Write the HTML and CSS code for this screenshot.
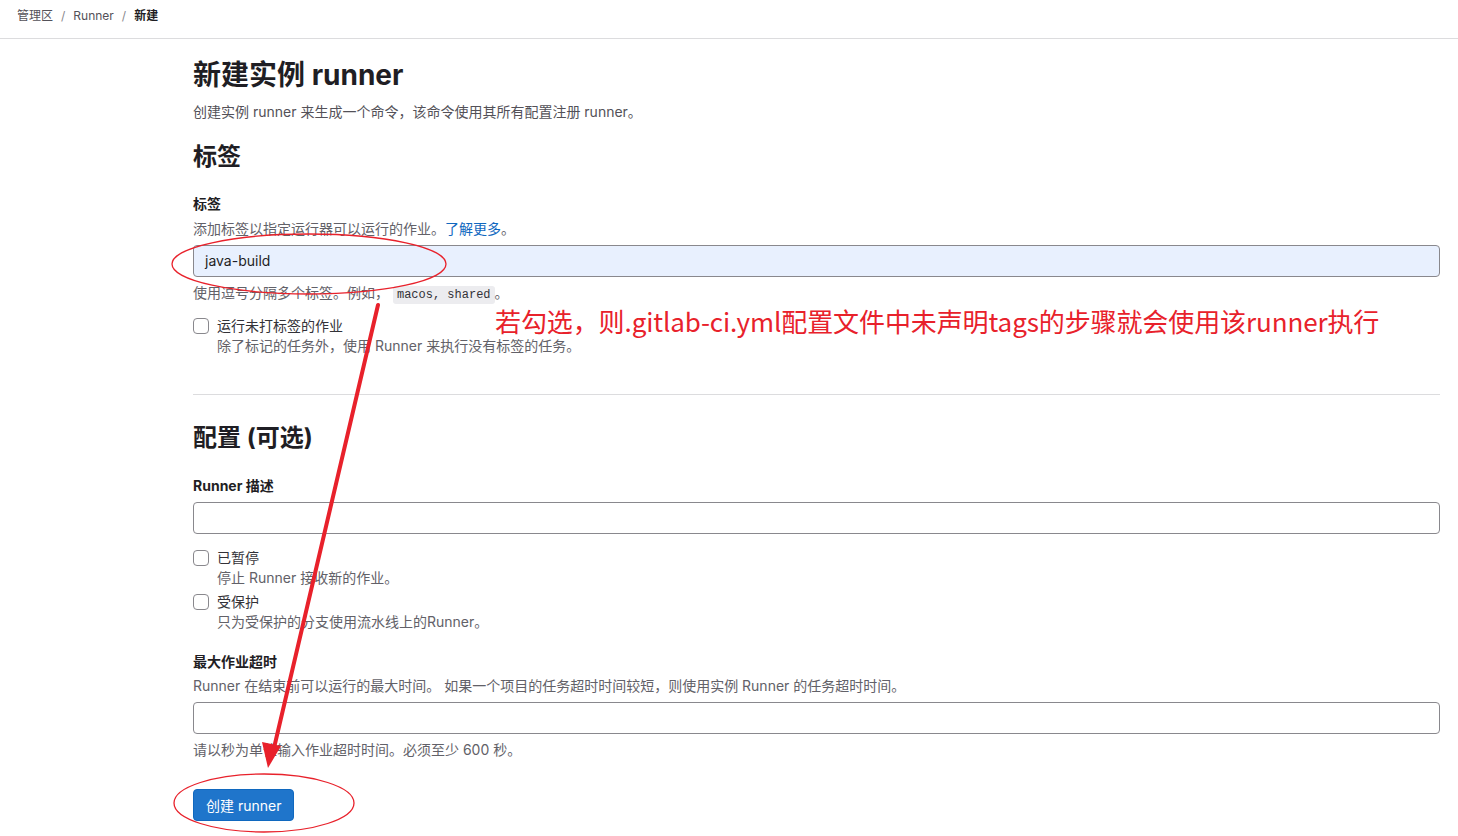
FILE: index.html
```html
<!DOCTYPE html>
<html lang="zh-CN">
<head>
<meta charset="utf-8">
<title>新建实例 runner</title>
<link rel="stylesheet" href="styles.css">
</head>
<body>
<header class="topbar">
  <nav class="crumbs">
    <a class="crumb">管理区</a><span class="sep">/</span>
    <a class="crumb">Runner</a><span class="sep">/</span>
    <span class="crumb current">新建</span>
  </nav>
</header>
<main class="content">
  <h1 class="title">新建实例 runner</h1>
  <p class="lead">创建实例 runner 来生成一个命令，该命令使用其所有配置注册 runner。</p>

  <h2 class="section first">标签</h2>
  <label class="label l-tags">标签</label>
  <p class="help top">添加标签以指定运行器可以运行的作业。<a class="link">了解更多</a>。</p>
  <div class="input filled">java-build</div>
  <p class="help below">使用逗号分隔多个标签。例如， <code class="code">macos, shared</code>。</p>

  <div class="check c-untagged">
    <span class="box"></span>
    <div class="check-text">
      <div class="check-label">运行未打标签的作业</div>
      <div class="help">除了标记的任务外，使用 Runner 来执行没有标签的任务。</div>
    </div>
  </div>

  <hr class="divider">

  <h2 class="section">配置 (可选)</h2>
  <label class="label l-desc">Runner 描述</label>
  <div class="input"></div>

  <div class="check c-paused">
    <span class="box"></span>
    <div class="check-text">
      <div class="check-label">已暂停</div>
      <div class="help">停止 Runner 接收新的作业。</div>
    </div>
  </div>
  <div class="check c-protected">
    <span class="box"></span>
    <div class="check-text">
      <div class="check-label">受保护</div>
      <div class="help">只为受保护的分支使用流水线上的Runner。</div>
    </div>
  </div>

  <label class="label l-timeout">最大作业超时</label>
  <p class="help top tight">Runner 在结束前可以运行的最大时间。 如果一个项目的任务超时时间较短，则使用实例 Runner 的任务超时时间。</p>
  <div class="input"></div>
  <p class="help below">请以秒为单位输入作业超时时间。必须至少 600 秒。</p>

  <button class="btn">创建 runner</button>
</main>

<svg class="annot" width="1458" height="836" viewBox="0 0 1458 836" xmlns="http://www.w3.org/2000/svg">
  <ellipse cx="309" cy="264" rx="137" ry="30" fill="none" stroke="#e8212b" stroke-width="1.3"/>
  <ellipse cx="264" cy="803" rx="90" ry="29" fill="none" stroke="#e8212b" stroke-width="1.3"/>
  <line x1="378" y1="305" x2="274" y2="748" stroke="#e8212b" stroke-width="4" stroke-linecap="round"/>
  <polygon points="268,768 262,742 281,746" fill="#e8212b"/>
</svg>
<div class="note">若勾选，则.gitlab-ci.yml配置文件中未声明tags的步骤就会使用该runner执行</div>
</body>
</html>
```
FILE: styles.css
```css
* { box-sizing: border-box; }
html, body { margin: 0; padding: 0; background: #fff; }
body {
  font-family: Inter, "Noto Sans CJK SC", "Noto Sans", sans-serif;
  font-size: 14px;
  line-height: 20px;
  color: #333238;
  position: relative;
  width: 1458px;
  height: 836px;
  overflow: hidden;
}
.topbar {
  height: 39px;
  border-bottom: 1px solid #dcdcde;
  padding: 7px 0 0 17px;
}
.crumbs { display: flex; align-items: center; font-size: 12px; line-height: 18px; height: 18px; }
.crumb { color: #535158; text-decoration: none; }
.crumb.current { color: #1f1e24; font-weight: 700; }
.sep { color: #89888d; margin: 0 8px; }

.content { padding: 0 18px 0 193px; }
.title {
  margin: 19px 0 0;
  font-size: 28px;
  line-height: 35px;
  height: 35px;
  font-weight: 700;
  color: #1f1e24;
}
.lead { margin: 9px 0 0; color: #535158; height: 20px; }
.section {
  margin: 20px 0 0;
  font-size: 24px;
  line-height: 30px;
  height: 30px;
  font-weight: 700;
  color: #1f1e24;
}
.label { display: block; font-weight: 700; color: #1f1e24; font-size: 14px; height: 20px; }
.l-tags { margin-top: 22px; }
.l-desc { margin-top: 23px; }
.l-timeout { margin-top: 20px; }
.help { margin: 0; color: #626168; font-size: 14px; height: 20px; white-space: nowrap; }
.help.top { margin-top: 5px; }
.help.top.tight { margin-top: 4px; }
.help.below { margin-top: 6px; }
.link { color: #1068bf; text-decoration: none; }
.code {
  font-family: "Liberation Mono", "DejaVu Sans Mono", monospace;
  font-size: 12px;
  line-height: 16px;
  background: #ececef;
  color: #333238;
  padding: 2px 4px;
  border-radius: 3px;
}
.input {
  margin-top: 6px;
  height: 32px;
  border: 1px solid #89888d;
  border-radius: 4px;
  padding: 5px 11px;
  font-size: 14px;
  color: #1f1e24;
}
.input.filled { background: #e8f0fe; }

.check { display: flex; gap: 8px; align-items: flex-start; }
.box {
  flex: none;
  width: 16px;
  height: 16px;
  border: 1px solid #89888d;
  border-radius: 4px;
  margin-top: 2px;
  background: #fff;
}
.check-label { color: #333238; height: 20px; }
.c-untagged { margin-top: 13px; }
.c-paused { margin-top: 14px; }
.c-protected { margin-top: 4px; }

.divider {
  margin: 38px 0 0;
  border: 0;
  border-top: 1px solid #dcdcde;
  height: 0;
}
.divider + .section { margin-top: 28px; }

.btn {
  display: block;
  margin-top: 29px;
  height: 32px;
  padding: 0 12px;
  background: #1f75cb;
  border: 1px solid #1068bf;
  border-radius: 4px;
  color: #fff;
  font-family: inherit;
  font-size: 14px;
}

.annot { position: absolute; left: 0; top: 0; pointer-events: none; }
.note {
  position: absolute;
  left: 495px;
  top: 304px;
  font-family: "Noto Sans CJK SC", sans-serif;
  font-size: 26px;
  line-height: 34px;
  color: #e8212b;
  white-space: nowrap;
  letter-spacing: -0.1px;
}
```
